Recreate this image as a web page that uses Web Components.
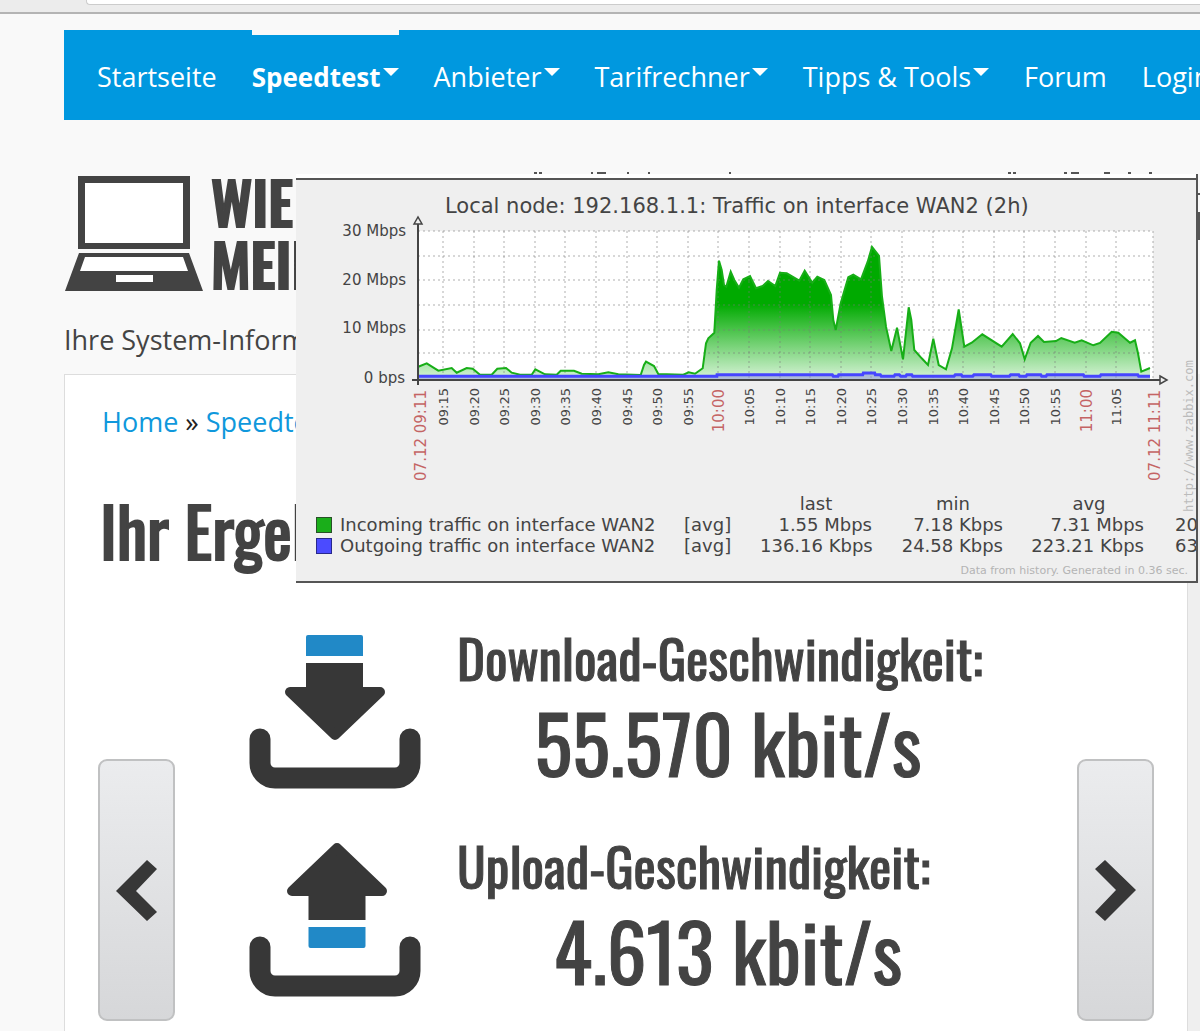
<!DOCTYPE html>
<html lang="de">
<head>
<meta charset="utf-8">
<title>Speedtest</title>
<style>
body{margin:0;min-height:100vh;background:#f9f9f9;overflow:hidden;font-family:"Open Sans","Noto Sans",sans-serif;color:#444}
</style>
</head>
<body>
<speed-page></speed-page>
<script>
const define=(name,html,setup)=>customElements.define(name,class extends HTMLElement{
  constructor(){super();this.attachShadow({mode:'open'});}
  connectedCallback(){
    this.shadowRoot.innerHTML=typeof html==='function'?html(this):html;
    if(setup)setup(this);
  }
});

define('browser-edge',`<style>
:host{display:block;height:14px;box-sizing:border-box;background:#ececec;border-bottom:2px solid #b4b4b4;padding-left:86px}
div{height:4px;background:#fff;border:1px solid #ccc;border-width:0 0 1px 1px;border-radius:0 0 0 4px}
</style><div></div>`);

define('nav-item',el=>`<style>
:host{display:block;flex:none}
a{display:flex;gap:2px;height:90px;box-sizing:border-box;border-top:5px solid transparent;color:#fff;text-decoration:none;font-size:27px;line-height:84px;white-space:nowrap}
:host([active]) a{font-weight:700;font-size:26px;border-color:#f9f9f9}
i{margin-top:33px;width:0;height:0;border:8px solid transparent;border-top-color:#fff;border-bottom:0}
</style><a href="#"><slot></slot>${el.hasAttribute('menu')?'<i></i>':''}</a>`);

define('main-nav',`<style>
:host{display:block;margin:16px 0 0 64px;background:#0098df;overflow:hidden}
nav{display:flex;gap:35px;padding-left:33px}
</style><nav>
<nav-item>Startseite</nav-item><nav-item active menu>Speedtest</nav-item><nav-item menu>Anbieter</nav-item>
<nav-item menu>Tarifrechner</nav-item><nav-item menu>Tipps &amp; Tools</nav-item><nav-item>Forum</nav-item><nav-item>Login</nav-item>
</nav>`);

define('site-head',`<style>
:host{display:block;margin:56px 0 0 64px}
.logo{display:flex;gap:8px}
svg{flex:none}
b{font:500 58px/62px Oswald,"Liberation Sans Narrow",sans-serif;color:#434343;-webkit-text-stroke:2px #434343;height:115px;margin-top:-6px;margin-bottom:6px}
p{margin:29px 0 14px;font-size:27px;line-height:40px}
</style>
<div class="logo"><svg width="139" height="115" viewBox="64 176 139 115">
<path fill="#434343" d="M78 176h112v73H78zM79 253h110l14 38H65z"/>
<path fill="#fff" d="M85 183h98v60H85zM85 257h98l5 14H80zM116 275h37v7h-37z"/></svg>
<b>WIE<br>MEIN</b></div>
<p>Ihre System-Inform</p>`);

define('slide-button',el=>`<style>
:host{display:block;flex:none}
button{display:flex;align-items:center;justify-content:center;width:77px;height:262px;padding:0;border:2px solid #c0c1c2;border-radius:9px;background:linear-gradient(#ebecee,#d6d7d9)}
</style><button aria-label="${el.getAttribute('label')}"><svg width="42" height="61" viewBox="0 0 42 61">
<path fill="#373737" d="${el.hasAttribute('next')?'M41 30 10 0 0 9 21 30 0 52 10 61z':'M0 31 31 0 41 9 20 31 41 52 31 61z'}"/></svg></button>`);

define('speed-result',el=>{
  const up=el.getAttribute('kind')==='up';
  const arrow=up
    ?'<path fill="#2189c7" d="M59.500 84h57v19q0 2-2 2h-53q-2 0-2-2z"/><path fill="#373737" d="M59.500 45h57v32h-57z"/><path fill="#373737" stroke="#373737" stroke-width="10" stroke-linejoin="round" d="M43 48 88 5l45 43z"/>'
    :'<path fill="#2189c7" d="M57 21V2q0-2 2-2h53q2 0 2 2v19z"/><path fill="#373737" d="M57 28h57v30H57z"/><path fill="#373737" stroke="#373737" stroke-width="10" stroke-linejoin="round" d="M41 57h90L86 100z"/>';
  return `<style>
:host{display:flex;gap:36px;height:154px;align-items:flex-start}
svg{flex:none}
div{flex:1;font-family:Oswald,"Liberation Sans Narrow",sans-serif;color:#434343;-webkit-text-stroke:1px #434343;white-space:nowrap}
h2{margin:0 0 18px;font-size:53px;line-height:44px;font-weight:400}
p{margin:0;font-size:79px;line-height:90px;text-align:center}
</style>
<svg width="172" height="154" viewBox="0 0 172 154">${arrow}<path fill="none" stroke="#373737" stroke-width="21" stroke-linecap="round" d="M11 104v24a15 15 0 0 0 15 15h120a15 15 0 0 0 15-15v-24"/></svg>
<div><h2><slot name="label"></slot></h2><p><slot></slot></p></div>`;});

define('result-panel',`<style>
:host{display:flex}
section{flex:1;min-width:0;margin-left:64px;background:#fff;border:1px solid #ddd;padding:27px 33px 60px}
.end{flex:none;width:12px;background:#efefef}
nav{padding-left:4px}
h1{padding-left:2px}
nav{font-size:27px;line-height:40px;color:#222}
a{color:#0f98dc;text-decoration:none}
h1{margin:48px 0 65px;font:400 68px/80px Oswald,"Liberation Sans Narrow",sans-serif;color:#434343;-webkit-text-stroke:2px #434343;white-space:nowrap}
.row{display:flex;justify-content:space-between;align-items:flex-end}
.list{flex:1;display:flex;flex-direction:column;gap:54px;margin:0 78px 24px 74px}
</style><section>
<nav><a href="#">Home</a> » <a href="#">Speedte</a></nav>
<h1>Ihr Ergeb</h1>
<div class="row"><slide-button label="Zurück"></slide-button>
<div class="list">
<speed-result kind="down"><span slot="label">Download-Geschwindigkeit:</span>55.570 kbit/s</speed-result>
<speed-result kind="up"><span slot="label">Upload-Geschwindigkeit:</span>4.613 kbit/s</speed-result>
</div>
<slide-button next label="Weiter"></slide-button></div>
</section><div class="end"></div>`);

/* Curve samples, in thirds of a chart unit. */
const left=[55,590,80,580,115,602,155,594,170,608,200,594,218,596,240,614,275,614,292,596,318,594,335,608,360,614,395,614,406,598,435,613,470,614,482,602,522,602,545,611,595,613,625,607,655,613,722,615,732,585,738,575,762,588,775,612,850,614,866,607,885,611,908,595,918,520,925,505,943,488,950,360,957,272,965,300,972,345,979,350,992,305,1003,330,1017,353,1030,328,1050,318,1068,355,1088,348,1104,333,1126,348,1140,308,1160,310,1198,332];
const right=[14,302,37,338,52,320,73,330,93,375,100,450,107,480,122,400,145,322,160,314,183,328,203,275,216,231,237,258,246,380,258,470,274,543,291,473,309,568,326,412,334,450,343,540,365,565,384,585,400,506,416,585,438,598,456,535,476,418,493,530,515,518,547,493,605,530,638,492,660,520,674,568,692,518,714,498,732,516,768,513,784,504,824,518,845,511,880,526,900,519,935,485,955,488,990,518,1005,511,1014,550,1024,605,1050,594];
const blue=[55,619,950,619,951,614,1297,614,1300,619,1314,619,1316,614,1388,614,1390,609,1424,609,1426,614,1441,614,1444,619,1482,619,1485,614,1498,614,1502,619,1517,619,1520,614,1535,614,1538,619,1662,619,1666,614,1684,614,1687,619,1718,619,1722,614,1772,614,1775,619,1828,619,1832,614,1856,614,1859,619,1878,619,1881,614,1922,614,1925,619,1938,619,1941,614,2050,614,2053,619,2100,619,2103,614,2213,614,2216,619,2250,619];
function pts(a,dx=0){const r=[];for(let i=0;i<a.length;i+=2)r.push(((a[i]+dx)/3+400).toFixed(1)+','+(a[i+1]/3+170).toFixed(1));return r.join(' ');}
function chart(){
  const green=pts(left)+' '+pts(right,1200),line=pts(blue);
  let grid='',labels='';
  for(const gy of [231,256,280,305,330,353])grid+=`<path d="M418 ${gy}H1153"/>`;
  for(let i=0;i<23;i++){
    const x=Math.round(443+i*30.6),m=15+i*5,hour=m%60===0;
    grid+=`<path d="M${x} 231V378"/>`;
    const t=String(9+Math.floor(m/60)).padStart(2,'0')+':'+String(m%60).padStart(2,'0');
    labels+=`<text class="${hour?'red':'tick'}" text-anchor="end" transform="translate(${x+(hour?6:5)} ${hour?389:388}) rotate(-90)">${t}</text>`;
  }
  return `<svg viewBox="296 180 900 313" role="img" aria-label="Traffic">
<defs><linearGradient id="g" gradientUnits="userSpaceOnUse" x1="0" y1="304" x2="0" y2="378"><stop stop-color="#00aa00"/><stop offset="1" stop-color="#d4f2d4"/></linearGradient></defs>
<text x="445" y="213" font-size="21">Local node: 192.168.1.1: Traffic on interface WAN2 (2h)</text>
<g class="y" text-anchor="end"><text x="406" y="236">30 Mbps</text><text x="406" y="285">20 Mbps</text><text x="406" y="333">10 Mbps</text><text x="405" y="383">0 bps</text></g>
<path fill="#fff" d="M418 231h735v148H418z"/>
<polygon fill="url(#g)" points="418,379 ${green} 1150,379"/>
<g stroke="#777" stroke-opacity=".4" stroke-dasharray="2 3" fill="none" stroke-width="1.500">${grid}<path d="M1153 231V378"/></g>
<polyline fill="none" stroke="#17ae17" stroke-width="2" points="${green}"/>
<polygon fill="#8888dd" fill-opacity=".5" points="418,379 ${line} 1150,379"/>
<polyline fill="none" stroke="#4646ff" stroke-width="3" points="${line}"/>
<path fill="none" stroke="#444" stroke-width="2" d="M418 224V385M412 380h748"/>
<path fill="#efefef" stroke="#444" stroke-width="1.500" d="m414 224 4-7 4 7zM1160 376l7 4-7 4z"/>
${labels}
<text class="red" text-anchor="end" transform="translate(426 390) rotate(-90)">07.12 09:11</text>
<text class="red" text-anchor="end" transform="translate(1160 390) rotate(-90)">07.12 11:11</text>
<text class="mark" transform="translate(1193 512) rotate(-90)">http://www.zabbix.com</text></svg>`;
}

define('traffic-popup',()=>`<style>
:host{display:block;position:absolute;left:296px;right:2px;top:174px;background:#efefef;border:solid #555;border-width:0 2px 2px 0;overflow:hidden;font-family:"DejaVu Sans",sans-serif;color:#444}
.top{height:4px;background:#fff;border-bottom:2px solid #555}
svg{display:block;width:100%;overflow:visible}
text{fill:#444}
.y{font-size:15px}
.tick{font-size:13px}
.red{font-size:15px;fill:#c46464}
.mark{font:12px "DejaVu Sans Mono",monospace;fill:#bbb}
table{table-layout:fixed;width:900px;margin-left:20px;border-collapse:collapse;font-size:18px;line-height:21px;white-space:nowrap}
td,th{padding:0;font-weight:400;text-align:left;height:21px}
.n{text-align:right}th.n{text-align:center}
.p{padding-left:31px}
i{display:block;width:14px;height:14px;border:1px solid #285028;background:#1aae1a}
i.b{background:#4b4bff;border-color:#28288c}
p{margin:8px 8px 3px;font-size:11px;line-height:14px;text-align:right;color:#b4b4b4}
</style><div class="top"></div>${chart()}
<table><colgroup><col style="width:24px"><col style="width:344px"><col style="width:76px"><col style="width:112px"><col style="width:131px"><col style="width:141px"><col></colgroup>
<tr><th></th><th></th><th></th><th class="n">last</th><th class="n p">min</th><th class="n p">avg</th><th></th></tr>
<tr><td><i></i></td><td>Incoming traffic on interface WAN2</td><td>[avg]</td><td class="n">1.55 Mbps</td><td class="n">7.18 Kbps</td><td class="n">7.31 Mbps</td><td class="p">20</td></tr>
<tr><td><i class="b"></i></td><td>Outgoing traffic on interface WAN2</td><td>[avg]</td><td class="n">136.16 Kbps</td><td class="n">24.58 Kbps</td><td class="n">223.21 Kbps</td><td class="p">63</td></tr></table>
<p>Data from history. Generated in 0.36 sec.</p>`);

/* Tips of the header line that stays visible above the graph window. */
define('covered-line',`<style>:host{display:block;position:absolute;left:530px;top:172px}svg{display:block}</style>
<svg width="670" height="70" viewBox="530 172 670 70"><path stroke="#555" stroke-width="2" d="M534 173h3M539 173h3M591 173h2M597 173h9M627 173h2M648 173h2M729 173h2M1008 173h3M1013 173h3M1064 173h3M1071 173h8M1104 173h6M1128 173h3M1149 173h3M1197 194h3M1199 212v28"/></svg>`);

define('speed-page',`<style>:host{display:block;position:relative;min-height:100vh}</style>
<browser-edge></browser-edge><main-nav></main-nav><site-head></site-head><result-panel></result-panel><covered-line></covered-line><traffic-popup></traffic-popup>`);
</script>
</body>
</html>
